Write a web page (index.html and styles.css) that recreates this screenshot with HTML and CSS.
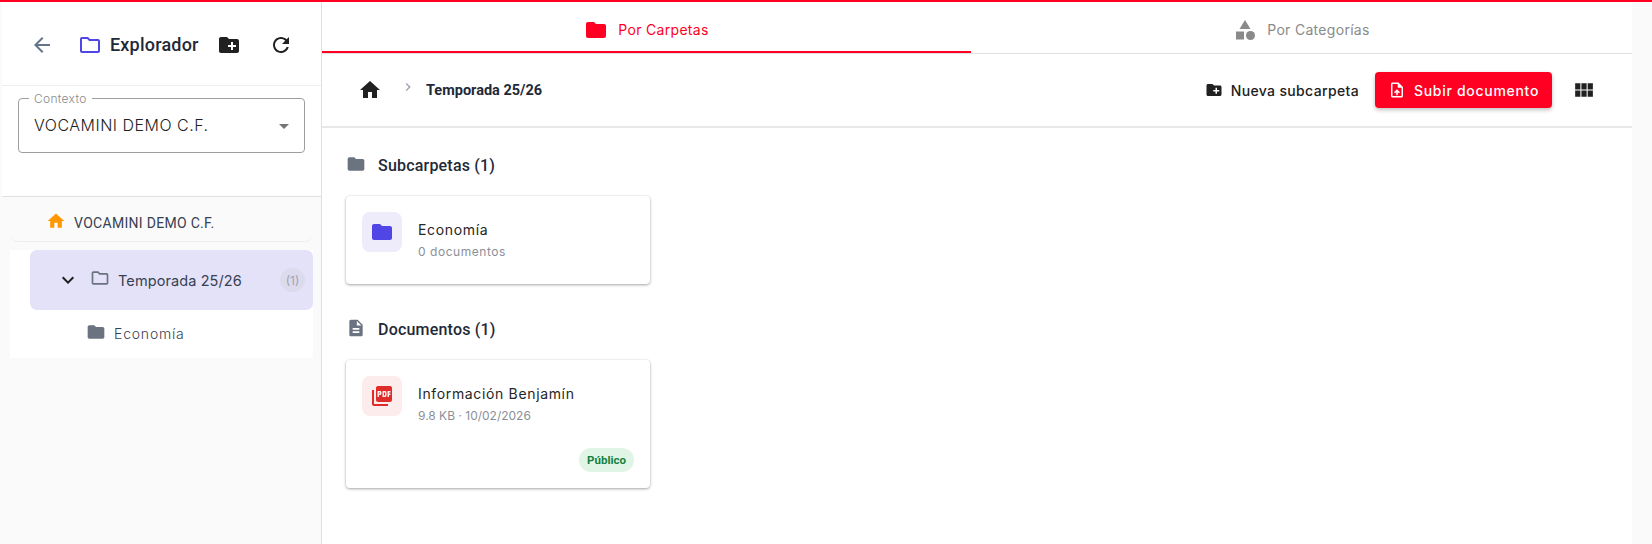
FILE: index.html
```html
<!DOCTYPE html>
<html lang="es">
<head>
    <meta charset="UTF-8">
    <title>Explorador</title>
    <link rel="stylesheet" href="styles.css">
</head>
<body>
    <div class="app">
        <aside class="sidebar">
            <div class="side-head">
                <svg class="icon back-icon" viewBox="0 0 24 24"><path d="M20 11H7.83l5.59-5.59L12 4l-8 8 8 8 1.41-1.41L7.83 13H20v-2z"/></svg>
                <svg class="icon explorer-icon" viewBox="0 0 24 24"><path d="M9.17 6l2 2H20v10H4V6h5.17M10 4H4c-1.1 0-1.99.9-1.99 2L2 18c0 1.1.9 2 2 2h16c1.1 0 2-.9 2-2V8c0-1.1-.9-2-2-2h-8l-2-2z"/></svg>
                <span class="side-title">Explorador</span>
                <svg class="icon new-folder-icon" viewBox="0 0 24 24"><path d="M20 6h-8l-2-2H4c-1.11 0-1.99.89-1.99 2L2 18c0 1.11.89 2 2 2h16c1.11 0 2-.89 2-2V8c0-1.11-.89-2-2-2zm-1 8h-3v3h-2v-3h-3v-2h3V9h2v3h3v2z"/></svg>
                <svg class="icon refresh-icon" viewBox="0 0 24 24"><path d="M17.65 6.35C16.2 4.9 14.21 4 12 4c-4.42 0-7.99 3.58-7.99 8s3.57 8 7.99 8c3.73 0 6.84-2.55 7.73-6h-2.08c-.82 2.33-3.04 4-5.65 4-3.31 0-6-2.69-6-6s2.69-6 6-6c1.66 0 3.14.69 4.22 1.78L13 11h7V4l-2.35 2.35z"/></svg>
            </div>
            <div class="context-box">
                <div class="context-select">
                    <span class="context-label">Contexto</span>
                    <span class="context-value">VOCAMINI DEMO C.F.</span>
                    <span class="context-arrow"></span>
                </div>
            </div>
            <div class="tree">
                <div class="tree-root">
                    <svg class="icon root-icon" viewBox="0 0 24 24"><path d="M10 20v-6h4v6h5v-8h3L12 3 2 12h3v8z"/></svg>
                    <span>VOCAMINI DEMO C.F.</span>
                </div>
                <div class="tree-list">
                    <div class="tree-selected">
                        <svg class="icon expand-icon" viewBox="0 0 24 24"><path d="M16.59 8.59L12 13.17 7.41 8.59 6 10l6 6 6-6z"/></svg>
                        <svg class="icon tree-folder-open" viewBox="0 0 24 24"><path d="M9.17 6l2 2H20v10H4V6h5.17M10 4H4c-1.1 0-1.99.9-1.99 2L2 18c0 1.1.9 2 2 2h16c1.1 0 2-.9 2-2V8c0-1.1-.9-2-2-2h-8l-2-2z"/></svg>
                        <span class="tree-selected-name">Temporada 25/26</span>
                        <span class="tree-badge">(1)</span>
                    </div>
                    <div class="tree-child">
                        <svg class="icon tree-folder" viewBox="0 0 24 24"><path d="M10 4H4c-1.1 0-1.99.9-1.99 2L2 18c0 1.1.9 2 2 2h16c1.1 0 2-.9 2-2V8c0-1.1-.9-2-2-2h-8l-2-2z"/></svg>
                        <span>Economía</span>
                    </div>
                </div>
            </div>
        </aside>

        <main class="main">
            <div class="tabs">
                <div class="tab tab-active">
                    <svg class="icon" viewBox="0 0 24 24"><path d="M10 4H4c-1.1 0-1.99.9-1.99 2L2 18c0 1.1.9 2 2 2h16c1.1 0 2-.9 2-2V8c0-1.1-.9-2-2-2h-8l-2-2z"/></svg>
                    <span>Por Carpetas</span>
                </div>
                <div class="tab">
                    <svg class="icon" viewBox="0 0 24 24"><path d="M12 2l-5.5 9h11z"/><circle cx="17.5" cy="17.5" r="4.5"/><path d="M3 13.5h8v8H3z"/></svg>
                    <span>Por Categorías</span>
                </div>
            </div>

            <div class="toolbar">
                <svg class="icon crumb-home" viewBox="0 0 24 24"><path d="M10 20v-6h4v6h5v-8h3L12 3 2 12h3v8z"/></svg>
                <svg class="icon crumb-sep" viewBox="0 0 24 24"><path d="M10 6L8.59 7.41 13.17 12l-4.58 4.59L10 18l6-6z"/></svg>
                <span class="crumb-current">Temporada 25/26</span>
                <div class="toolbar-actions">
                    <div class="btn-text">
                        <svg class="icon" viewBox="0 0 24 24"><path d="M20 6h-8l-2-2H4c-1.11 0-1.99.89-1.99 2L2 18c0 1.11.89 2 2 2h16c1.11 0 2-.89 2-2V8c0-1.11-.89-2-2-2zm-1 8h-3v3h-2v-3h-3v-2h3V9h2v3h3v2z"/></svg>
                        <span>Nueva subcarpeta</span>
                    </div>
                    <div class="btn-primary">
                        <svg class="icon" viewBox="0 0 24 24"><path d="M14 2H6c-1.1 0-1.99.9-1.99 2L4 20c0 1.1.89 2 1.99 2H18c1.1 0 2-.9 2-2V8l-6-6zm4 18H6V4h7v5h5v11zM8 15.01l1.41 1.41L11 14.84V19h2v-4.16l1.59 1.59L16 15.01 12.01 11z"/></svg>
                        <span>Subir documento</span>
                    </div>
                    <svg class="icon view-icon" viewBox="0 0 24 24"><path d="M4 11h5V5H4v6zm0 7h5v-6H4v6zm6 0h5v-6h-5v6zm6 0h5v-6h-5v6zm-6-7h5V5h-5v6zm6-6v6h5V5h-5z"/></svg>
                </div>
            </div>

            <div class="content">
                <div class="section-title">
                    <svg class="icon" viewBox="0 0 24 24"><path d="M10 4H4c-1.1 0-1.99.9-1.99 2L2 18c0 1.1.9 2 2 2h16c1.1 0 2-.9 2-2V8c0-1.1-.9-2-2-2h-8l-2-2z"/></svg>
                    <span>Subcarpetas (1)</span>
                </div>
                <div class="card card-folder">
                    <div class="card-row">
                        <div class="card-icon card-icon-folder">
                            <svg class="icon" viewBox="0 0 24 24"><path d="M10 4H4c-1.1 0-1.99.9-1.99 2L2 18c0 1.1.9 2 2 2h16c1.1 0 2-.9 2-2V8c0-1.1-.9-2-2-2h-8l-2-2z"/></svg>
                        </div>
                        <div class="card-text">
                            <div class="card-name">Economía</div>
                            <div class="card-meta">0 documentos</div>
                        </div>
                    </div>
                </div>

                <div class="section-title section-docs">
                    <svg class="icon" viewBox="0 0 24 24"><path d="M14 2H6c-1.1 0-1.99.9-1.99 2L4 20c0 1.1.89 2 1.99 2H18c1.1 0 2-.9 2-2V8l-6-6zm2 16H8v-2h8v2zm0-4H8v-2h8v2zm-3-5V3.5L18.5 9H13z"/></svg>
                    <span>Documentos (1)</span>
                </div>
                <div class="card card-doc">
                    <div class="card-row">
                        <div class="card-icon card-icon-pdf">
                            <svg class="icon" viewBox="0 0 24 24"><path d="M20 2H8c-1.1 0-2 .9-2 2v12c0 1.1.9 2 2 2h12c1.1 0 2-.9 2-2V4c0-1.1-.9-2-2-2zm-8.5 7.5c0 .83-.67 1.5-1.5 1.5H9v2H7.5V7H10c.83 0 1.5.67 1.5 1.5v1zm5 2c0 .83-.67 1.5-1.5 1.5h-2.5V7H15c.83 0 1.5.67 1.5 1.5v3zm4-3H19v1h1.5V11H19v2h-1.5V7h3v1.5zM9 9.5h1v-1H9v1zM4 6H2v14c0 1.1.9 2 2 2h14v-2H4V6zm10 5.5h1v-3h-1v3z"/></svg>
                        </div>
                        <div class="card-text">
                            <div class="card-name">Información Benjamín</div>
                            <div class="card-meta card-meta-doc">9.8 KB · 10/02/2026</div>
                        </div>
                    </div>
                    <div class="card-foot">
                        <span class="chip">Público</span>
                    </div>
                </div>
            </div>
        </main>
    </div>
</body>
</html>
```

FILE: styles.css
```css
* {
    margin: 0;
    padding: 0;
    box-sizing: border-box;
}

html, body {
    height: 100%;
    overflow: hidden;
}

body {
    background-color: #fafafa;
    border-top: 2px solid #ff0022;
    font-family: Inter, "Open Sans", sans-serif;
    color: #1f2937;
}

.icon {
    display: block;
    width: 24px;
    height: 24px;
    fill: currentColor;
    flex-shrink: 0;
}

.app {
    display: flex;
    height: 100%;
}

/* Sidebar */
.sidebar {
    width: 322px;
    flex-shrink: 0;
    padding-left: 2px;
    border-right: 1px solid #e0e0e0;
}

.side-head {
    height: 84px;
    background-color: #fff;
    border-bottom: 1px solid #eeeeee;
    display: flex;
    align-items: center;
    padding: 2px 0 0 28px;
    color: #1f2937;
}

.back-icon {
    color: #64748b;
}

.explorer-icon {
    color: #4f46e5;
    margin-left: 24px;
}

.side-title {
    font-family: Roboto, sans-serif;
    font-size: 18px;
    font-weight: 500;
    letter-spacing: 0.2px;
    margin-left: 8px;
    width: 107px;
}

.new-folder-icon {
    color: #212121;
}

.refresh-icon {
    color: #212121;
    margin-left: 28px;
}

.context-box {
    height: 111px;
    background-color: #fff;
    border-bottom: 1px solid #e0e0e0;
    padding: 12px 16px 0 16px;
}

.context-select {
    position: relative;
    height: 55px;
    border: 1px solid #9e9e9e;
    border-radius: 4px;
    display: flex;
    align-items: center;
    padding: 0 15px;
}

.context-label {
    position: absolute;
    top: -8px;
    left: 10px;
    background-color: #fff;
    padding: 0 5px;
    font-size: 12px;
    font-weight: 300;
    letter-spacing: 0.3px;
    line-height: 15px;
    color: #8a8a8a;
}

.context-value {
    font-size: 16px;
    font-weight: 300;
    letter-spacing: 0.5px;
    color: #222;
    margin-top: -1px;
}

.context-arrow {
    margin-left: auto;
    margin-top: 1px;
    border-left: 5px solid transparent;
    border-right: 5px solid transparent;
    border-top: 5px solid #757575;
}

.tree {
    padding: 0 8px;
}

.tree-root {
    height: 45px;
    display: flex;
    align-items: center;
    padding: 7px 0 0 36px;
    border-bottom: 1px solid #eeeeee;
    border-radius: 0 0 8px 8px;
    font-family: Roboto, sans-serif;
    font-size: 14px;
    letter-spacing: 0.3px;
    color: #374151;
}

.root-icon {
    width: 20px;
    height: 20px;
    color: #ff9800;
    margin-right: 8px;
    margin-top: -4px;
}

.tree-list {
    margin-top: 8px;
    background-color: #fff;
    padding-left: 20px;
    height: 108px;
}

.tree-selected {
    height: 60px;
    background-color: #e4e2f9;
    border-radius: 7px;
    display: flex;
    align-items: center;
    padding-left: 26px;
    color: #374151;
}

.expand-icon {
    color: #1f1f1f;
}

.tree-folder-open {
    width: 20px;
    height: 20px;
    color: #6b7280;
    margin: -4px 0 0 10px;
}

.tree-selected-name {
    font-size: 14.5px;
    font-weight: 400;
    letter-spacing: 0.1px;
    margin-left: 8px;
}

.tree-badge {
    width: 25px;
    height: 24px;
    margin-left: auto;
    margin-right: 8px;
    border-radius: 12px;
    background-color: #dcdbee;
    color: #9ca3af;
    font-size: 12px;
    display: flex;
    align-items: center;
    justify-content: center;
}

.tree-child {
    height: 47px;
    display: flex;
    align-items: center;
    padding-left: 56px;
    font-size: 14px;
    font-weight: 300;
    color: #374151;
    letter-spacing: 0.8px;
}

.tree-folder {
    width: 20px;
    height: 20px;
    color: #6b7280;
    margin-right: 8px;
    margin-top: -4px;
}

/* Main */
.main {
    width: 1310px;
    height: 100%;
    background-color: #fff;
}

.tabs {
    display: flex;
    align-items: flex-start;
    height: 52px;
    border-bottom: 1px solid #e0e0e0;
}

.tab {
    flex: 1;
    height: 51px;
    display: flex;
    align-items: center;
    justify-content: center;
    gap: 10px;
    font-size: 14px;
    letter-spacing: 0.3px;
    color: #8a8a8a;
    padding-top: 6px;
    border-bottom: 2px solid transparent;
}

.tab-active {
    flex: none;
    width: 649px;
    color: #ff0022;
    border-bottom-color: #ff0022;
}

.toolbar {
    height: 74px;
    border-bottom: 2px solid #e8e8e8;
    display: flex;
    align-items: center;
    padding: 0 40px 0 36px;
}

.crumb-home {
    color: #212121;
}

.crumb-sep {
    width: 16px;
    height: 16px;
    color: #9ca3af;
    margin: -6px 0 0 18px;
}

.crumb-current {
    font-family: Roboto, sans-serif;
    font-size: 14.5px;
    font-weight: 700;
    margin-left: 10px;
}

.toolbar-actions {
    margin-left: auto;
    display: flex;
    align-items: center;
}

.btn-text {
    display: flex;
    align-items: center;
    gap: 8px;
    font-size: 14px;
    font-weight: 500;
    letter-spacing: 0.35px;
    color: #212121;
}

.btn-text .icon {
    width: 18px;
    height: 18px;
}

.btn-primary {
    margin-left: 16px;
    width: 177px;
    height: 36px;
    background-color: #ff0022;
    border-radius: 4px;
    box-shadow: 0 2px 4px rgba(0, 0, 0, 0.25);
    display: flex;
    align-items: center;
    padding-left: 13px;
    gap: 8px;
    color: #fff;
    font-size: 14px;
    font-weight: 500;
    letter-spacing: 0.7px;
}

.btn-primary .icon {
    width: 18px;
    height: 18px;
}

.view-icon {
    width: 25px;
    height: 25px;
    margin-left: 19px;
    margin-right: -4px;
    color: #212121;
}

.content {
    padding: 24px 24px;
}

.section-title {
    display: flex;
    align-items: center;
    gap: 12px;
    font-family: Roboto, sans-serif;
    font-size: 16px;
    font-weight: 500;
    letter-spacing: 0.2px;
    height: 26px;
}

.section-title .icon {
    width: 20px;
    height: 20px;
    color: #6b7280;
    margin-top: -3px;
}

.section-docs {
    margin-top: 32px;
}

.card {
    width: 304px;
    margin-top: 18px;
    background-color: #fff;
    border-radius: 4px;
    box-shadow: 0 1px 3px rgba(0, 0, 0, 0.35), 0 0 2px rgba(0, 0, 0, 0.06);
    padding: 16px;
}

.card-folder {
    height: 88px;
}

.card-doc {
    height: 128px;
}

.card-row {
    display: flex;
    gap: 16px;
}

.card-icon {
    width: 40px;
    height: 40px;
    border-radius: 8px;
    display: flex;
    align-items: center;
    justify-content: center;
}

.card-icon-folder {
    background-color: #eeecfb;
    color: #4f46e5;
}

.card-icon-pdf {
    background-color: #fdecec;
    color: #e02b2b;
}

.card-name {
    font-size: 14px;
    font-weight: 400;
    letter-spacing: 0.65px;
    line-height: 18px;
    margin-top: 9px;
    color: #262626;
}

.card-meta {
    font-size: 12px;
    letter-spacing: 0.55px;
    line-height: 16px;
    margin-top: 5px;
    color: #8b8f99;
}

.card-meta-doc {
    letter-spacing: 0;
}

.card-foot {
    display: flex;
    justify-content: flex-end;
    margin-top: 24px;
}

.chip {
    font-family: Roboto, sans-serif;
    font-size: 11.5px;
    font-weight: 700;
    line-height: 24px;
    padding: 0 8px;
    border-radius: 12px;
    color: #15803d;
    background-color: #e0f5e5;
}
```
